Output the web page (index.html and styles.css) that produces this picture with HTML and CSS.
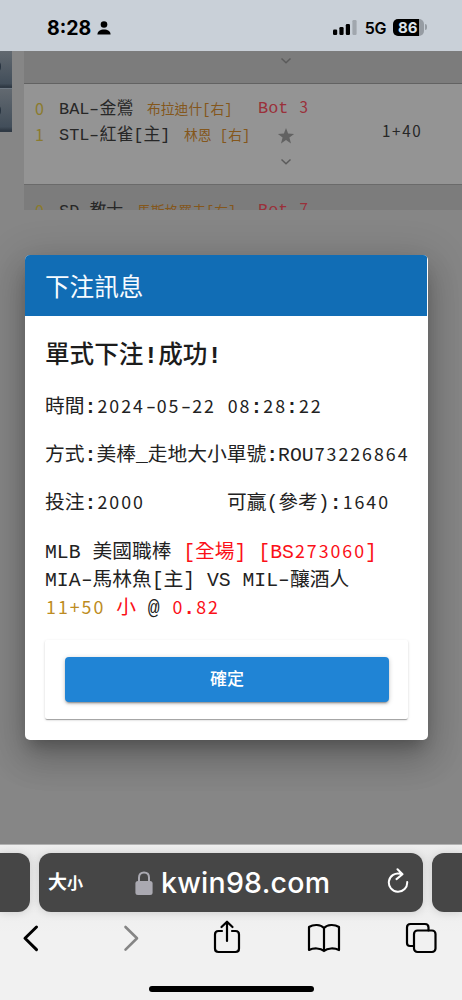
FILE: index.html
```
<!DOCTYPE html>
<html lang="zh-Hant">
<head>
<meta charset="utf-8">
<meta name="viewport" content="width=device-width">
<title>下注訊息</title>
<link rel="stylesheet" href="styles.css">
</head>
<body>
<div class="phone">
  <header class="status">
    <div class="clock"><span>8:28</span>
      <svg width="14" height="14" viewBox="0 0 14 14"><circle cx="7" cy="3.5" r="3.3"/><path d="M.4 13.6c0-3.4 3-5.1 6.6-5.1s6.6 1.7 6.6 5.1z"/></svg>
    </div>
    <div class="signals">
      <svg width="24" height="16" viewBox="0 0 24 16"><rect x="0" y="9.5" width="4.2" height="5.5" rx="1.2"/><rect x="6.4" y="7" width="4.2" height="8" rx="1.2"/><rect x="12.8" y="4" width="4.2" height="11" rx="1.2"/><rect x="19.4" y="0" width="4.2" height="15" rx="1.2" fill="#a1a7ae"/></svg>
      <span class="network">5G</span>
      <span class="battery"><span>86</span></span><i class="battery-tip"></i>
    </div>
  </header>
  <main class="page">
    <aside class="tabs"><div class="tab"><i></i></div><div class="tab second"><i></i></div></aside>
    <section class="games">
      <div class="game first"><svg class="chevron" width="12" height="8" viewBox="0 0 12 8"><path d="M1.5 1.5 6 5.8l4.5-4.3"/></svg></div>
      <div class="game current">
        <div class="teams">
          <div class="team"><b class="n score">0</b><span class="name">BAL<s>-</s>金鶯</span><span class="pitcher far">布拉迪什[右]</span></div>
          <div class="team"><b class="n score">1</b><span class="name">STL<s>-</s>紅雀[主]</span><span class="pitcher near">林恩 [右]</span></div>
        </div>
        <div class="inning"><span class="bot">Bot <b class="n">3</b></span>
          <svg width="18" height="18" viewBox="0 0 18 18"><path fill="#626262" d="m9 1 2.1 5.6 6 .3-4.7 3.7 1.6 5.8L9 13.1l-5 3.3 1.6-5.8L.9 6.9l6-.3z"/></svg>
          <svg class="chevron" width="12" height="8" viewBox="0 0 12 8"><path d="M1.5 1.5 6 5.8l4.5-4.3"/></svg>
        </div>
        <div class="line"><b class="n">1+40</b></div>
      </div>
      <div class="game next">
        <div class="teams"><div class="team"><b class="n score">0</b><span class="name">SD<s>-</s>教士</span><span class="pitcher third">馬斯格羅夫[右]</span></div></div>
        <div class="inning"><span class="bot">Bot <b class="n">7</b></span></div>
      </div>
    </section>
    <div class="overlay">
      <div class="dialog">
        <h1>下注訊息</h1>
        <div class="dialog-body">
          <h2>單式下注<em>!</em>成功<em>!</em></h2>
          <p class="time">時間<em>:</em><b class="n">2024<s>-</s>05<s>-</s>22 08</b><em>:</em><b class="n">28</b><em>:</em><b class="n">22</b></p>
          <p class="method">方式<em>:</em>美棒_走地大小單號<em>:</em>ROU<b class="n">73226864</b></p>
          <p class="stake"><span>投注<em>:</em><b class="n">2000</b></span><span>可贏(參考)<em>:</em><b class="n">1640</b></span></p>
          <div class="bet">
            <div>MLB 美國職棒 <span class="red">[全場] [BS<b class="n">273060</b>]</span></div>
            <div>MIA<s>-</s>馬林魚[主] VS MIL<s>-</s>釀酒人</div>
            <div><span class="gold"><b class="n">11+50</b></span> <span class="red">小</span> @ <span class="red"><b class="n">0</b><em>.</em><b class="n">82</b></span></div>
          </div>
          <div class="actions"><button>確定</button></div>
        </div>
      </div>
    </div>
  </main>
  <footer class="browser">
    <div class="addresses">
      <div class="previous"></div>
      <div class="address">
        <span class="size"><span>大</span><small>小</small></span>
        <span class="domain"><svg width="18" height="24" viewBox="0 0 18 24"><path d="M4 11V6.500C4 3.200 6 1.400 9 1.400s5 1.800 5 5.100V11" fill="none" stroke="#aaa9b1" stroke-width="2"/><rect x=".4" y="10" width="17.200" height="14" rx="2.500" fill="#aaa9b1"/></svg><span>kwin98.com</span></span>
        <svg class="reload" width="22" height="26" viewBox="0 0 22 26"><path d="M13.500 5.800A9.200 9.200 0 1 0 20.200 14M10.500 1.300l5 5-6 4.800"/></svg>
      </div>
      <div class="following"></div>
    </div>
    <nav class="toolbar">
      <svg width="462" height="44" viewBox="0 0 462 44">
        <path d="M36.500 15 25 26.300l11.500 11.300" stroke-width="3"/>
        <path d="M125.500 15 137 26.300l-11.500 11.300" stroke="#858585" stroke-width="2.600"/>
        <path d="M222 19h-3.500q-3.500 0-3.500 3.500v14q0 3.500 3.500 3.500h17q3.500 0 3.500-3.500v-14q0-3.500-3.500-3.500H232M227 29V10M221.500 15l5.500-5.300 5.500 5.300"/>
        <path d="M324 16c-3.500-3.800-10.500-3.800-15-1v23c4.500-2.200 11.500-2.200 15 1 3.500-3.200 10.500-3.200 15-1V15c-4.500-2.800-11.500-2.800-15 1v22"/>
        <path d="M413 34h-3q-3 0-3-3V15.500q0-3.500 3.500-3.500H425q3.500 0 3.500 3.500v3"/><rect x="414" y="18.500" width="21.500" height="21.500" rx="3.500"/>
      </svg>
    </nav>
    <div class="home"></div>
  </footer>
</div>
</body>
</html>
```
FILE: styles.css
```
* { box-sizing: border-box; }
body { margin: 0; font-family: "Liberation Mono", "Noto Sans CJK TC", monospace; color: #222; }
h1, h2, p { margin: 0; }
s, em { text-decoration: none; font-style: normal; line-height: 0; }
s { display: inline-block; width: .6em; transform: scaleX(1.5); font-family: "Liberation Mono", monospace; text-align: center; letter-spacing: 0; }
em { font-weight: 700; }
.n { font-family: "Noto Sans CJK TC", sans-serif; font-size: .9em; font-weight: 400; letter-spacing: .112em; line-height: 0; word-spacing: .33em; padding-left: .06em; margin-right: -.06em; }
.n s { width: .667em; }
.phone { width: 462px; height: 1000px; display: flex; flex-direction: column; overflow: hidden; white-space: nowrap; }
.status { height: 51px; flex: none; display: flex; justify-content: space-between; background: #c9d0d8; padding: 17px 35px 0 47px; font-family: Inter, sans-serif; font-weight: 700; color: #000; }
.clock { display: flex; gap: 6px; font-size: 19.5px; line-height: 22px; letter-spacing: 0; }
.clock svg { margin-top: 4px; }
.signals { display: flex; align-items: flex-start; }
.signals > svg { margin-top: 3px; }
.network { font-size: 16px; line-height: 22px; margin: 0 7px 0 8px; letter-spacing: -.4px; font-weight: 600; }
.battery { width: 31px; height: 17px; margin-top: 2px; border-radius: 5px; overflow: hidden; background: linear-gradient(90deg, #000 26px, #969ca3 26px); color: #dce3ea; font-size: 15px; line-height: 17px; padding-left: 5px; }
.battery-tip { width: 2px; height: 6px; border-radius: 0 2px 2px 0; background: #969ca3; margin: 7px 0 0 1px; }
.page { position: relative; height: 793px; flex: none; display: flex; background: #868686; }
.tabs { width: 24px; }
.tab { width: 12px; height: 37px; padding-top: 11px; background: linear-gradient(#626970, #424e5a 88%, #303a45 96%); overflow: hidden; }
.second { height: 44px; padding-top: 17px; border-top: 1px solid #707a84; }
.tab i { display: block; width: 5px; height: 9px; margin-left: -4px; border-radius: 50%; border: 1.5px solid #283440; }
.games { width: 438px; height: 159px; overflow: hidden; font-size: 16.9px; color: #272727; }
.game { display: flex; }
.first { height: 33px; background: #7c7c7c; border-bottom: 1px solid #626262; padding: 6px 0 0 256px; }
.current { height: 101px; background: #949494; border-bottom: 1px solid #6a6a6a; padding-top: 13px; }
.next { height: 27px; background: #7c7c7c; padding-top: 14px; }
.teams { width: 234px; flex: none; }
.team { display: flex; height: 26px; line-height: 26px; }
.score { width: 25px; flex: none; padding-left: 11px; margin: -2px 0 0; color: #8b7b2d; line-height: 26px; font-size: 16px; }
.name { flex: none; }
.current .name, .next .name { width: 98px; padding-left: 10px; }
.team:nth-child(2) .name { width: 135px; }
.next .name { width: 88px; }
.pitcher { color: #84571c; font-size: 13.8px; padding-top: 1px; }
.inning { width: 56px; flex: none; }
.inning > svg { display: block; margin-left: 19px; }
.inning .chevron { margin: 13px 0 0 22px; }
.chevron path { fill: none; stroke: #5b5b5b; stroke-width: 1.5; }
.bot { display: block; height: 24px; line-height: 24px; color: #9a303a; margin-bottom: 6px; }
.line { padding: 25px 0 0 67px; line-height: 22px; }
.overlay { position: absolute; inset: 0; display: flex; justify-content: flex-start; padding: 204px 0 0 25px; }
.dialog { width: 403px; height: 485px; border-radius: 5px; background: #fff; overflow: hidden; box-shadow: 0 10px 14px -6px rgba(0,0,0,.22), 0 20px 32px 2px rgba(0,0,0,.14), 0 8px 38px 6px rgba(0,0,0,.17); }
.dialog h1 { height: 61px; background: #116db5; color: #f6fbff; padding-left: 20px; font: 400 24.6px/60px "Noto Sans CJK TC", sans-serif; margin-right: 1px; }
.dialog-body { padding: 24px 20px 20px; font-size: 19.75px; line-height: 28px; font-weight: 400; }
.dialog h2 { font-size: 24.6px; height: 34px; line-height: 34px; font-weight: 500; color: #1c1c1c; margin-bottom: 20px; font-family: "Liberation Mono", "Noto Sans CJK TC", monospace; }
.dialog p { height: 28px; margin-bottom: 20px; }
.dialog .bet { margin: 21px 0 17px; }
.stake { display: flex; }
.stake span:first-child { width: 182px; }
.bet > div { height: 28px; }
.red { color: #fb1018; }
.gold { color: #bd8c22; }
.actions { width: 363px; height: 79px; padding: 17px 20px; border-radius: 2px; background: #fff; box-shadow: 0 2px 1px -1px rgba(0,0,0,.2), 0 1px 1px rgba(0,0,0,.14), 0 1px 3px rgba(0,0,0,.14); }
button { display: block; width: 324px; height: 45px; border: 0; padding: 0 0 4px; border-radius: 4px; background: #2084d5; color: #fff; font: 500 17px/40px "Noto Sans CJK TC", sans-serif; box-shadow: 0 3px 1px -2px rgba(0,0,0,.2), 0 2px 2px rgba(0,0,0,.14), 0 1px 5px rgba(0,0,0,.2); }
.browser { height: 156px; background: linear-gradient(#eee, #e8e8e8 12px, #f1f1f1 88px); border-top: 1px solid #b2b2b2; padding-top: 8px; }
.addresses { display: grid; grid-template-columns: 30px 384px 30px; gap: 9px; height: 59px; }
.addresses > div { background: #464646; box-shadow: 0 1px 9px rgba(0,0,0,.13); }
.previous { border-radius: 0 12px 12px 0; }
.following { border-radius: 12px 0 0 12px; }
.address { border-radius: 12px; display: flex; align-items: center; color: #fff; font-family: Inter, "Noto Sans CJK TC", sans-serif; padding: 0 14px 0 9px; }
.size { width: 87px; font-size: 19px; font-weight: 700; line-height: 24px; display: flex; align-items: baseline; }
.size small { font-size: 16px; }
.domain { display: flex; align-items: center; gap: 8px; flex: 1; font-size: 28.5px; font-weight: 500; letter-spacing: .25px; }
.reload { fill: none; stroke: #fff; stroke-width: 2; stroke-linecap: round; stroke-linejoin: round; margin-bottom: 3px; }
.toolbar { height: 74px; }
.toolbar svg { display: block; fill: none; stroke: #000; stroke-width: 2.2; stroke-linecap: round; stroke-linejoin: round; }
.home { width: 165px; height: 6px; border-radius: 3px; background: #000; margin: 0 0 0 149px; }
```
